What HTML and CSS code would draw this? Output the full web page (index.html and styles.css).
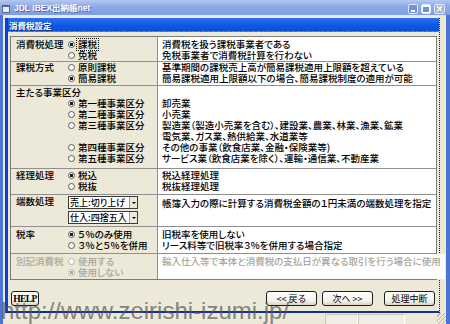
FILE: index.html
```html
<!DOCTYPE html>
<html lang="ja">
<head>
    <meta charset="UTF-8">
    <meta name="viewport" content="width=device-width, initial-scale=1.0">
    <title>消費税設定</title>
    <link rel="stylesheet" href="styles.css">
</head>
<body>
<div class="app">
    <div class="app-title">
        <span class="app-icon"></span>
        <span class="app-name">JDL IBEX出納帳net</span>
        <div class="caption">
            <span class="cap-btn cap-min"></span>
            <span class="cap-btn cap-max"></span>
            <span class="cap-btn cap-close">×</span>
        </div>
    </div>
    <div class="client">
        <div class="dialog">
            <div class="dlg-title">消費税設定</div>
            <div class="dlg-body">
                <div class="settings">
                    <div class="row first">
                        <div class="left">
                            <div class="label">消費税処理</div>
                            <div class="opts">
                                <div class="opt"><span class="radio on"></span><span class="focus">課税</span></div>
                                <div class="opt"><span class="radio"></span>免税</div>
                            </div>
                        </div>
                        <div class="desc">
                            <div>消費税を扱う課税事業者である</div>
                            <div>免税事業者で消費税計算を行わない</div>
                        </div>
                    </div>
                    <div class="row method">
                        <div class="left">
                            <div class="label">課税方式</div>
                            <div class="opts">
                                <div class="opt"><span class="radio"></span>原則課税</div>
                                <div class="opt"><span class="radio on"></span>簡易課税</div>
                            </div>
                        </div>
                        <div class="desc">
                            <div>基準期間の課税売上高が簡易課税適用上限額を超えている</div>
                            <div>簡易課税適用上限額以下の場合、簡易課税制度の適用が可能</div>
                        </div>
                    </div>
                    <div class="row tall">
                        <div class="left stack">
                            <div class="label">主たる事業区分</div>
                            <div class="opts">
                                <div class="opt"><span class="radio on"></span>第一種事業区分</div>
                                <div class="opt"><span class="radio"></span>第二種事業区分</div>
                                <div class="opt"><span class="radio"></span>第三種事業区分</div>
                                <div class="opt"></div>
                                <div class="opt"><span class="radio"></span>第四種事業区分</div>
                                <div class="opt"><span class="radio"></span>第五種事業区分</div>
                            </div>
                        </div>
                        <div class="desc">
                            <div></div>
                            <div>卸売業</div>
                            <div>小売業</div>
                            <div>製造業（製造小売業を含む）、建設業、農業、林業、漁業、鉱業</div>
                            <div>電気業、ガス業、熱供給業、水道業等</div>
                            <div>その他の事業（飲食店業、金融・保険業等)</div>
                            <div>サービス業（飲食店業を除く）、運輸・通信業、不動産業</div>
                        </div>
                    </div>
                    <div class="row account">
                        <div class="left">
                            <div class="label">経理処理</div>
                            <div class="opts">
                                <div class="opt"><span class="radio on"></span>税込</div>
                                <div class="opt"><span class="radio"></span>税抜</div>
                            </div>
                        </div>
                        <div class="desc">
                            <div>税込経理処理</div>
                            <div>税抜経理処理</div>
                        </div>
                    </div>
                    <div class="row rounding">
                        <div class="left">
                            <div class="label">端数処理</div>
                            <div class="opts selects">
                                <div class="select"><span class="val">売上:切り上げ</span><span class="arrow"></span></div>
                                <div class="select"><span class="val">仕入:四捨五入</span><span class="arrow"></span></div>
                            </div>
                        </div>
                        <div class="desc">
                            <div>帳簿入力の際に計算する消費税金額の１円未満の端数処理を指定</div>
                        </div>
                    </div>
                    <div class="row rate">
                        <div class="left">
                            <div class="label">税率</div>
                            <div class="opts">
                                <div class="opt"><span class="radio on"></span>５％のみ使用</div>
                                <div class="opt"><span class="radio"></span>３％と５％を併用</div>
                            </div>
                        </div>
                        <div class="desc">
                            <div>旧税率を使用しない</div>
                            <div>リース料等で旧税率３%を併用する場合指定</div>
                        </div>
                    </div>
                    <div class="row off">
                        <div class="left">
                            <div class="label">別記消費税</div>
                            <div class="opts">
                                <div class="opt"><span class="radio"></span>使用する</div>
                                <div class="opt"><span class="radio on"></span>使用しない</div>
                            </div>
                        </div>
                        <div class="desc">
                            <div>輸入仕入等で本体と消費税の支払日が異なる取引を行う場合に使用</div>
                        </div>
                    </div>
                </div>
                <div class="actions">
                    <button class="btn help">HELP</button>
                    <button class="btn back">&lt;&lt; 戻る</button>
                    <button class="btn next">次へ &gt;&gt;</button>
                    <button class="btn stop">処理中断</button>
                </div>
            </div>
        </div>
        <div class="statusbar">
            <span class="panel p1"></span>
            <span class="panel p2"></span>
            <span class="grip"></span>
        </div>
    </div>
    <div class="watermark">http://www.zeirishi-izumi.jp/</div>
</div>
</body>
</html>
```

FILE: styles.css
```css
*{
    margin: 0;
    padding: 0;
    box-sizing: border-box;
}
body{
    width: 450px;
    height: 324px;
    overflow: hidden;
    font-family: "Noto Sans CJK JP", sans-serif;
    font-size: 9.5px;
    font-weight: 500;
    line-height: 11px;
    font-feature-settings: "palt";
    color: #000;
    background: #ece9d8;
}
.app{
    position: relative;
    width: 450px;
    height: 324px;
    display: flex;
    flex-direction: column;
}

/* outer window title */
.app-title{
    height: 15px;
    display: flex;
    align-items: center;
    padding-left: 2px;
    background: linear-gradient(#b4c8f2, #8fabe8 40%, #7e9de2);
    color: #fff;
}
.app-icon{
    width: 8px;
    height: 8px;
    margin-top: 2px;
    border: 1px solid #5a6a8c;
    border-top-width: 2px;
    background: #e8ecf4;
}
.app-name{
    margin-left: 4px;
    margin-top: 2px;
    font-family: "Liberation Sans", "Noto Sans CJK JP", sans-serif;
    font-size: 8.5px;
    font-weight: bold;
    text-shadow: 1px 1px 0 #4e69b0;
}
.caption{
    margin-left: auto;
    margin-right: 5px;
    margin-top: 3px;
    display: flex;
    gap: 3px;
}
.cap-btn{
    width: 10px;
    height: 10px;
    border: 1px solid #e6ecfa;
    border-radius: 2px;
    background: #6f8fdf;
    display: flex;
    align-items: center;
    justify-content: center;
}
.cap-min::after{
    content: "";
    width: 4px;
    height: 2px;
    margin-top: 4px;
    background: #fff;
}
.cap-max::after{
    content: "";
    width: 6px;
    height: 5px;
    border: 1px solid #fff;
    border-top-width: 2px;
}
.cap-close{
    width: 11px;
    background: #a7b1c8;
    font-family: "DejaVu Sans", sans-serif;
    font-size: 10px;
    line-height: 10px;
    font-weight: bold;
    color: #fff;
}

/* client area */
.client{
    flex: 1;
    display: flex;
    flex-direction: column;
    padding: 3px 6px 0 2px;
    border-left: 3px solid #4d73d6;
    border-right: 4px solid #4d73d6;
    background: #ece9d8;
}
.dialog{
    height: 295px;
    display: flex;
    flex-direction: column;
    border-left: 3px solid #0b3fcf;
    border-right: 1px dotted #1a1a3a;
    border-bottom: 2px solid #0c2f9a;
}
.dlg-title{
    height: 14px;
    padding-left: 1px;
    background: linear-gradient(#2a6ff0, #0b58e4 60%, #0a4fd8);
    border-bottom: 1px dashed #4f86f0;
    color: #fff;
    font-size: 8.5px;
    font-weight: bold;
    line-height: 14px;
    text-shadow: 1px 1px 0 #0a2f8a;
}
.dlg-body{
    flex: 1;
    padding: 4px 2px 0 2px;
    background: #ece9d8;
}

/* settings table */
.settings{
    border: 1px solid #7c7c7c;
}
.row{
    display: grid;
    grid-template-columns: 146px 1fr;
}
.row + .row{
    border-top: 1px solid #8f8f8f;
}
.left{
    display: flex;
    padding: 1px 0 0 5px;
}
.label{
    width: 52px;
    white-space: nowrap;
}
.stack{
    flex-direction: column;
}
.stack .opts{
    margin-left: 52px;
}
.opt{
    height: 11px;
    display: flex;
    align-items: center;
    white-space: nowrap;
}
.radio{
    flex: none;
    width: 7px;
    height: 7px;
    margin-right: 3px;
    border: 1px solid #585858;
    border-radius: 50%;
    background: #fff;
}
.radio.on{
    background: radial-gradient(circle, #1c1c1c 0 1.5px, #fff 2px);
}
.focus{
    outline: 1px dotted #000;
    padding: 0 1px;
    margin-left: -1px;
}
.desc{
    background: #fff;
    border-left: 1px solid #8f8f8f;
    padding: 1px 4px 0 4px;
    white-space: nowrap;
}
.desc div{
    height: 11px;
}
.row.first .left,
.row.first .desc{
    padding-top: 2px;
}
.row.method .left,
.row.method .desc{
    padding-top: 0;
    padding-bottom: 1px;
}
.row.tall .left,
.row.tall .desc{
    padding-top: 1px;
    padding-bottom: 4px;
}
.row.account .left,
.row.account .desc{
    padding-bottom: 2px;
}
.row.rate .left,
.row.rate .desc{
    padding-top: 2px;
    padding-bottom: 2px;
}
.row.off .left,
.row.off .desc{
    padding-top: 2px;
    padding-bottom: 1px;
}
.selects{
    display: flex;
    flex-direction: column;
    gap: 2px;
    padding-bottom: 2px;
}
.select{
    width: 70px;
    height: 13px;
    display: flex;
    border: 1px solid #3a3a3a;
    background: #fff;
    font-size: 9px;
}
.select .val{
    flex: 1;
    padding-left: 1px;
    white-space: nowrap;
    overflow: hidden;
}
.select .arrow{
    width: 8px;
    display: flex;
    align-items: center;
    justify-content: center;
    background: #ece9d8;
    border-left: 1px solid #9a9a9a;
}
.select .arrow::after{
    content: "";
    border-left: 2px solid transparent;
    border-right: 2px solid transparent;
    border-top: 2px solid #000;
}
.rounding .desc{
    padding-top: 3px;
}
.row.off{
    color: #a8a698;
}
.row.off .radio{
    border-color: #b6b4a8;
}
.row.off .radio.on{
    background: radial-gradient(circle, #a8a698 0 1.5px, #fff 2px);
}

/* buttons */
.actions{
    margin-top: 11px;
    padding: 0 2px 0 1px;
    display: flex;
    align-items: center;
}
.btn{
    height: 15px;
    width: 51px;
    border: 1px solid #1e1e1e;
    border-radius: 3px;
    background: linear-gradient(#ffffff, #f2f1ea 70%, #d8d5c6);
    font-family: "Noto Sans CJK JP", sans-serif;
    font-size: 9px;
    line-height: 12px;
    color: #000;
}
.help{
    width: 28px;
    font-family: "Liberation Serif", serif;
    font-weight: bold;
    font-size: 9.5px;
    letter-spacing: -0.6px;
}
.back{
    margin-left: auto;
}
.next{
    margin-left: 5px;
}
.stop{
    margin-left: 11px;
}

/* status bar */
.statusbar{
    height: 11px;
    margin: 0 -6px 0 -2px;
    padding-left: 322px;
    display: flex;
    align-items: stretch;
}
.panel{
    margin-top: 1px;
    border: 1px solid #c8c5b6;
    border-right-color: #fff;
    border-bottom: none;
    background: #f0eee4;
}
.p1{
    width: 33px;
}
.p2{
    width: 47px;
}
.grip{
    margin-left: auto;
    width: 9px;
    background: repeating-linear-gradient(135deg, transparent 0 2px, #b5b2a2 2px 3px);
}

.watermark{
    position: absolute;
    left: 1px;
    top: 299px;
    font-family: "Liberation Sans", sans-serif;
    font-size: 24px;
    line-height: 24px;
    color: rgba(85, 85, 85, 0.7);
    white-space: nowrap;
}
```
